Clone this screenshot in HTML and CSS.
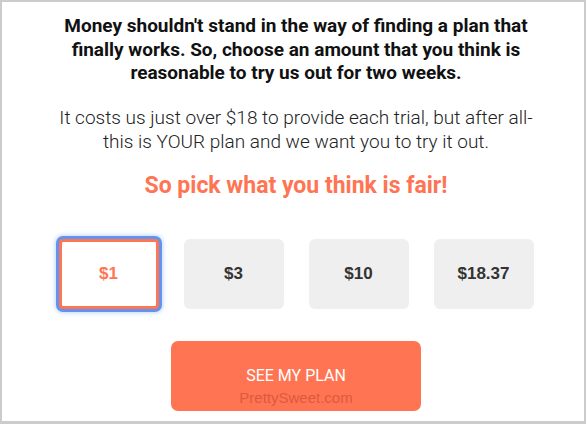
FILE: index.html
```html
<!DOCTYPE html>
<html>
<head>
<meta charset="utf-8">
<link rel="stylesheet" href="styles.css">
</head>
<body>
<div class="frame">
  <div class="content">
    <h1 class="headline">Money shouldn't stand in the way of finding a plan that finally works. So, choose an amount that you think is reasonable to try us out for two weeks.</h1>
    <p class="intro">It costs us just over $18 to provide each trial, but after all- this is YOUR plan and we want you to try it out.</p>
    <h2 class="pick">So pick what you think is fair!</h2>
    <div class="amounts">
      <button class="amount selected">$1</button>
      <button class="amount">$3</button>
      <button class="amount">$10</button>
      <button class="amount">$18.37</button>
    </div>
    <div class="cta-wrap">
      <button class="cta">SEE MY PLAN</button>
      <span class="watermark">PrettySweet.com</span>
    </div>
  </div>
</div>
</body>
</html>
```

FILE: styles.css
```css
html, body {
  margin: 0;
  padding: 0;
}
body {
  background: #cccccc;
  width: 586px;
  height: 424px;
  overflow: hidden;
}
.frame {
  margin: 2px 2px 0 2px;
  width: 582px;
  height: 419px;
  background: #ffffff;
  font-family: Roboto, "Liberation Sans", sans-serif;
}
.content {
  padding: 12px 40px 0 46px;
  display: flex;
  flex-direction: column;
  align-items: center;
  text-align: center;
}
.headline {
  margin: 0;
  font-size: 19px;
  line-height: 23.5px;
  font-weight: 700;
  color: #111;
}
.intro {
  margin: 21px 0 0 0;
  font-size: 19px;
  line-height: 24px;
  font-weight: 300;
  color: #222;
}
.pick {
  margin: 18px 0 0 0;
  font-size: 23px;
  line-height: 28px;
  font-weight: 700;
  color: #ff7452;
}
.amounts {
  margin-top: 39px;
  display: flex;
  gap: 25px;
  justify-content: center;
}
.amount {
  width: 100px;
  height: 70px;
  box-sizing: border-box;
  border: none;
  border-radius: 6px;
  background: #efefef;
  font-family: "Liberation Sans", Arial, sans-serif;
  font-weight: 700;
  font-size: 17px;
  color: #333;
  padding: 0;
}
.amount.selected {
  background: #fff;
  border: 3px solid #ff7452;
  border-radius: 4px;
  color: #ff7452;
  box-shadow: 0 0 0 3px rgba(84, 140, 240, 0.9), 0 0 4px 4px rgba(84, 140, 240, 0.35);
}
.cta-wrap {
  position: relative;
  margin-top: 32px;
}
.cta {
  width: 250px;
  height: 70px;
  border: none;
  border-radius: 7px;
  background: #ff7452;
  color: #fff;
  font-family: Roboto, "Liberation Sans", sans-serif;
  font-size: 16px;
  font-weight: 400;
  padding: 0;
  display: block;
}
.watermark {
  position: absolute;
  left: 0;
  right: 0;
  top: 48px;
  text-align: center;
  font-family: "Liberation Sans", Arial, sans-serif;
  font-size: 15px;
  color: rgba(160, 50, 30, 0.4);
  pointer-events: none;
}
```
